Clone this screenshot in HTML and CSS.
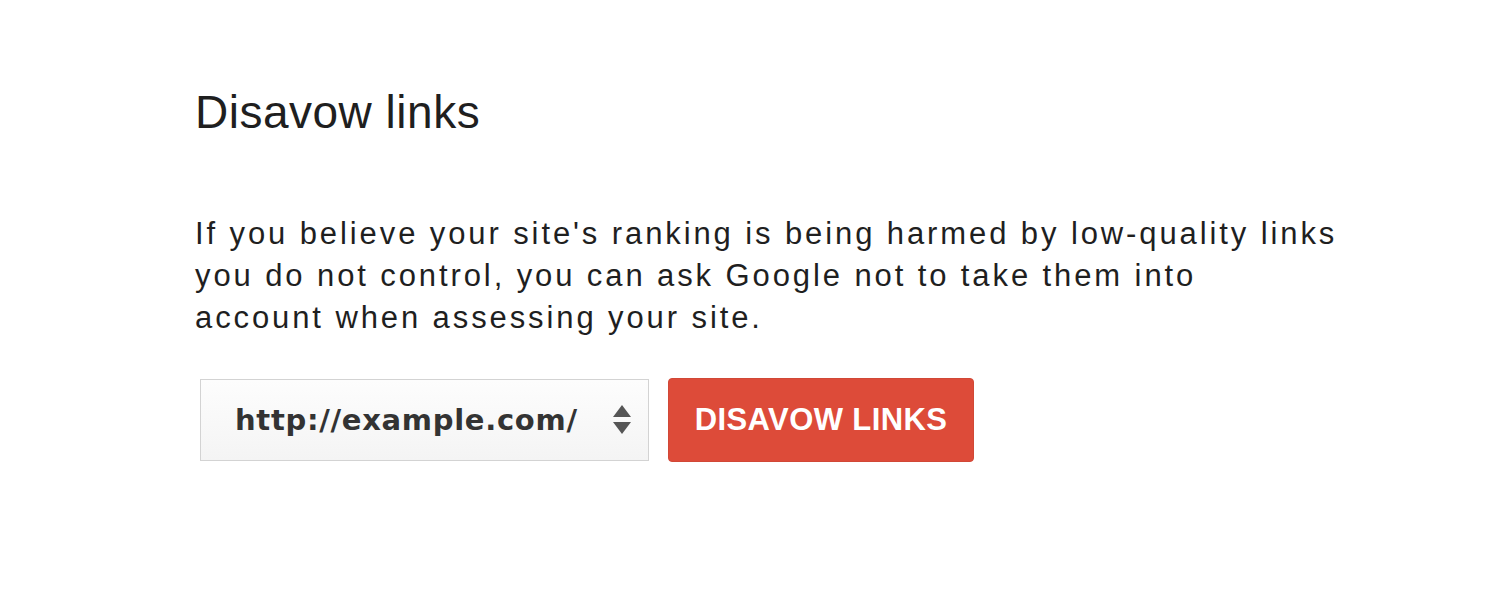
FILE: index.html
```html
<!DOCTYPE html>
<html lang="en">
<head>
<meta charset="utf-8">
<title>Disavow links</title>
<link rel="stylesheet" href="styles.css">
</head>
<body>
<main class="panel">
  <h1 class="title">Disavow links</h1>
  <p class="intro">If you believe your site's ranking is being harmed by low-quality links<br>you do not control, you can ask Google not to take them into<br>account when assessing your site.</p>
  <div class="controls">
    <div class="site-select">
      <span class="site-url">http://example.com/</span>
      <svg class="arrows" width="20" height="32" viewBox="0 0 20 32" aria-hidden="true">
        <polygon points="10,1 19,13 1,13" fill="#555"/>
        <polygon points="1,18 19,18 10,30" fill="#555"/>
      </svg>
    </div>
    <button class="disavow-btn" type="button">DISAVOW LINKS</button>
  </div>
</main>
</body>
</html>
```
FILE: styles.css
```css
html, body {
  margin: 0;
  padding: 0;
  background: #ffffff;
}

.panel {
  padding: 89px 0 0 195px;
  font-family: "Liberation Sans", Arial, sans-serif;
  color: #1f1f1f;
}

.title {
  margin: 0;
  font-size: 46px;
  font-weight: normal;
  line-height: 46px;
  letter-spacing: 0.5px;
}

.intro {
  margin: 78px 0 0 0;
  width: 1260px;
  font-size: 31px;
  line-height: 42px;
  letter-spacing: 2.9px;
}

.controls {
  display: flex;
  align-items: center;
  gap: 19px;
  margin-top: 39px;
  padding-left: 5px;
}

.site-select {
  box-sizing: border-box;
  width: 449px;
  height: 82px;
  border: 1px solid #d3d3d3;
  background: linear-gradient(#fdfdfd, #f4f4f4);
  display: flex;
  align-items: center;
  justify-content: space-between;
  padding: 0 16px 0 34px;
}

.site-url {
  font-family: "DejaVu Sans", Verdana, sans-serif;
  font-weight: bold;
  font-size: 29px;
  color: #333;
  letter-spacing: 0.7px;
}

.arrows {
  display: block;
}

.disavow-btn {
  box-sizing: border-box;
  width: 306px;
  height: 84px;
  border: 1px solid #d14836;
  border-radius: 4px;
  background: #dd4b39;
  color: #ffffff;
  font-family: "Liberation Sans", Arial, sans-serif;
  font-weight: bold;
  font-size: 31px;
  letter-spacing: 0.4px;
  padding: 0;
  cursor: pointer;
}
```
